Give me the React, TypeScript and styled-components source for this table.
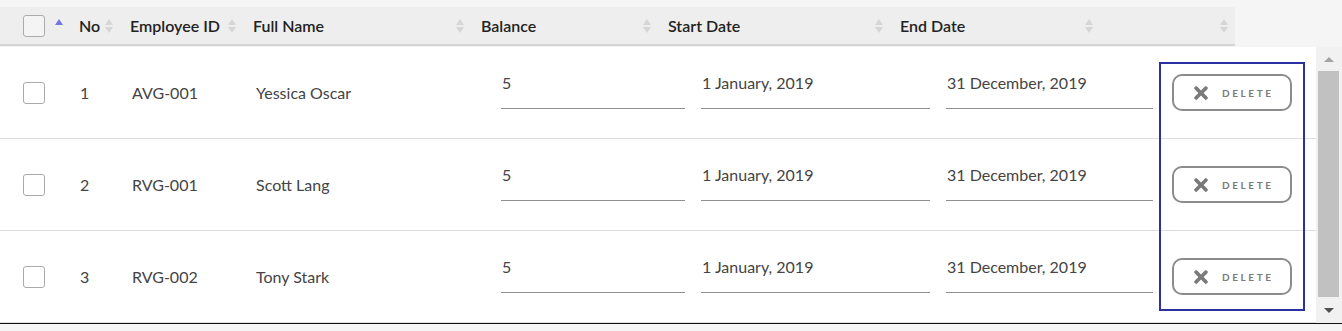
import React from "react";
import styled, { createGlobalStyle } from "styled-components";
import { FaTimes } from "react-icons/fa";

interface LeaveRow {
    no: number;
    employeeId: string;
    fullName: string;
    balance: string;
    startDate: string;
    endDate: string;
}

const rows: LeaveRow[] = [
    { no: 1, employeeId: "AVG-001", fullName: "Yessica Oscar", balance: "5", startDate: "1 January, 2019", endDate: "31 December, 2019" },
    { no: 2, employeeId: "RVG-001", fullName: "Scott Lang", balance: "5", startDate: "1 January, 2019", endDate: "31 December, 2019" },
    { no: 3, employeeId: "RVG-002", fullName: "Tony Stark", balance: "5", startDate: "1 January, 2019", endDate: "31 December, 2019" },
];

const headerColumns = ["", "No", "Employee ID", "Full Name", "Balance", "Start Date", "End Date", ""];

const GlobalStyle = createGlobalStyle`
  body {
    margin: 0;
    background: #f5f5f5;
    font-family: Lato, "Open Sans", sans-serif;
  }
`;

const Page = styled.div`
  padding-top: 7px;
  width: 1342px;
  height: 331px;
  box-sizing: border-box;
`;

const HeaderRow = styled.div`
  display: grid;
  grid-template-columns: 69px 51px 123px 228px 187px 232px 210px 135px;
  width: 1235px;
  height: 39px;
  box-sizing: border-box;
  background: #eeeeee;
  border-bottom: 2px solid #d4d4d4;
`;

const HeaderCell = styled.div<{ $first?: boolean }>`
  display: flex;
  align-items: center;
  justify-content: space-between;
  padding: ${(props) => props.$first ? "0 6px 0 23px" : "0 7px 0 10px"};
  font-size: 16px;
  font-weight: 600;
  color: #222222;
`;

const SortIcon = styled.div`
  display: flex;
  flex-direction: column;
  gap: 2px;
`;

const Triangle = styled.span<{ $down?: boolean; $color: string }>`
  width: 0;
  height: 0;
  border-left: 4px solid transparent;
  border-right: 4px solid transparent;
  ${(props) => props.$down
        ? `border-top: 6px solid ${props.$color};`
        : `border-bottom: 6px solid ${props.$color};`}
`;

const Checkbox = styled.span<{ $header?: boolean }>`
  display: block;
  width: 22px;
  height: 22px;
  box-sizing: border-box;
  border: 1px solid #ababab;
  border-radius: 3px;
  background: ${(props) => props.$header ? "#f4f4f4" : "#ffffff"};
`;

const BodyWrap = styled.div`
  display: flex;
  height: 276px;
  margin-top: 1px;
  border-bottom: 1px solid #111111;
  background: #ffffff;
`;

const TableBody = styled.div`
  position: relative;
  flex: 1;
  display: flex;
  flex-direction: column;
`;

const Row = styled.div`
  display: grid;
  grid-template-columns: 70px 52px 124px 245px 200px 245px 223px 146px 1fr;
  height: 92px;
  box-sizing: border-box;
  border-bottom: 1px solid #dddddd;

  &:last-child {
    height: 91px;
    border-bottom: none;
  }
`;

const Cell = styled.div<{ $first?: boolean }>`
  display: flex;
  align-items: center;
  padding-left: ${(props) => props.$first ? "23px" : "10px"};
  font-size: 16px;
  color: #444444;
`;

const InputCell = styled.div`
  display: flex;
  align-items: center;
  padding: 0 6px 0 10px;
`;

const UnderlineInput = styled.div`
  flex: 1;
  height: 38px;
  margin-top: -6px;
  box-sizing: border-box;
  padding: 0 0 13px 1px;
  line-height: 24px;
  font-size: 16px;
  color: #444444;
  border-bottom: 1px solid #8f8f8f;
`;

const ActionCell = styled.div`
  display: flex;
  align-items: center;
  padding-left: 13px;
`;

const DeleteButton = styled.button`
  display: flex;
  align-items: center;
  gap: 11px;
  width: 120px;
  height: 37px;
  box-sizing: border-box;
  padding: 0 0 0 17px;
  background: #ffffff;
  border: 2px solid #8c8c8c;
  border-radius: 10px;
  color: #7a7a7a;
  font-family: Lato, sans-serif;
  font-size: 10px;
  font-weight: 700;
  letter-spacing: 2.6px;
`;

const FocusOutline = styled.div`
  position: absolute;
  left: 1159px;
  top: 15px;
  width: 146px;
  height: 249px;
  box-sizing: border-box;
  border: 2px solid #2b30a3;
  pointer-events: none;
`;

const ScrollBar = styled.div`
  width: 26px;
  display: flex;
  flex-direction: column;
  background: #f1f1f1;
`;

const ScrollButton = styled.div<{ $height: number }>`
  height: ${(props) => props.$height}px;
  display: flex;
  align-items: center;
  justify-content: center;
`;

const ScrollThumb = styled.div`
  flex: 1;
  margin: 0 3px 0 2px;
  background: #c1c1c1;
`;

const ScrollArrow = styled.span<{ $down?: boolean }>`
  width: 0;
  height: 0;
  border-left: 5px solid transparent;
  border-right: 5px solid transparent;
  ${(props) => props.$down
        ? "border-top: 5px solid #505050;"
        : "border-bottom: 5px solid #a3a3a3;"}
`;

const SortArrows = ({ active }: { active?: boolean }) => (
    <SortIcon>
        {active ? (
            <Triangle $color="#7474e6" style={{ marginBottom: 8 }} />
        ) : (
            <>
                <Triangle $color="#d6d6d6" />
                <Triangle $color="#d6d6d6" $down />
            </>
        )}
    </SortIcon>
);

const App = () => (
    <Page>
        <GlobalStyle />
        <HeaderRow>
            {headerColumns.map((label, i) => (
                <HeaderCell key={i} $first={i === 0}>
                    {i === 0 ? <Checkbox $header /> : <span>{label}</span>}
                    <SortArrows active={i === 0} />
                </HeaderCell>
            ))}
        </HeaderRow>
        <BodyWrap>
            <TableBody>
                {rows.map((row) => (
                    <Row key={row.no}>
                        <Cell $first><Checkbox /></Cell>
                        <Cell>{row.no}</Cell>
                        <Cell>{row.employeeId}</Cell>
                        <Cell>{row.fullName}</Cell>
                        <InputCell><UnderlineInput>{row.balance}</UnderlineInput></InputCell>
                        <InputCell><UnderlineInput>{row.startDate}</UnderlineInput></InputCell>
                        <InputCell><UnderlineInput>{row.endDate}</UnderlineInput></InputCell>
                        <ActionCell>
                            <DeleteButton>
                                <FaTimes size={20} />
                                <span>DELETE</span>
                            </DeleteButton>
                        </ActionCell>
                        <div />
                    </Row>
                ))}
                <FocusOutline />
            </TableBody>
            <ScrollBar>
                <ScrollButton $height={24}><ScrollArrow /></ScrollButton>
                <ScrollThumb />
                <ScrollButton $height={26}><ScrollArrow $down /></ScrollButton>
            </ScrollBar>
        </BodyWrap>
    </Page>
);

export default App;
